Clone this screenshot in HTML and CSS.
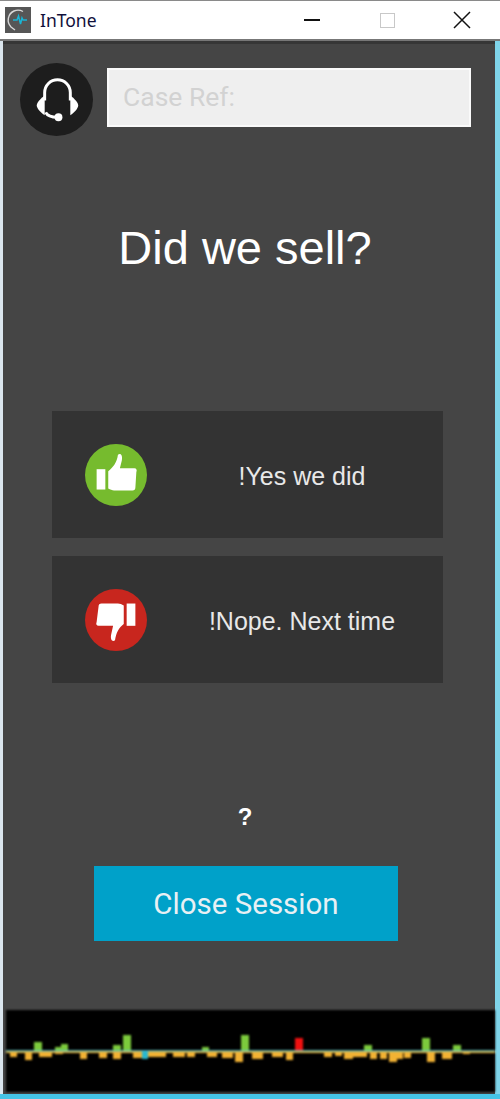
FILE: index.html
```html
<!DOCTYPE html>
<html lang="en">
<head>
    <meta charset="UTF-8">
    <meta name="viewport" content="width=device-width, initial-scale=1.0">
    <title>InTone</title>
    <link rel="stylesheet" href="styles.css">
</head>
<body>
    <div class="window">
        <div class="titlebar">
            <svg class="app-icon" viewBox="0 0 26 26">
                <rect width="26" height="26" fill="#565656"/>
                <path d="M18 4.500a10 10 0 0 0-9-.5 10 10 0 0 0-3 16l4 3" fill="none" stroke="#d8d8d8" stroke-width="1.400"/>
                <path d="M8 13h4l1.500-4 2 8 1.500-6 1 2h4" fill="none" stroke="#19b5d6" stroke-width="1.500"/>
            </svg>
            <span class="app-name">InTone</span>
            <div class="controls">
                <span class="minimize"></span>
                <span class="maximize"></span>
                <svg class="close" viewBox="0 0 18 18">
                    <path d="M1 1l16 16M17 1L1 17" stroke="#111" stroke-width="1.500" fill="none"/>
                </svg>
            </div>
        </div>

        <div class="content">
            <div class="top-row">
                <div class="avatar">
                    <svg viewBox="0 0 74 74" width="73" height="73">
                        <path d="M25 38V30a13 13 0 0 1 26 0v8" fill="none" stroke="#fff" stroke-width="3"/>
                        <path d="M25 33c-4 3-8 7-8 10s4 7 8 10z" fill="#fff"/>
                        <path d="M51 33c4 3 8 7 8 10s-4 7-8 10z" fill="#fff"/>
                        <path d="M26 50c2 4 6 5 12 5" fill="none" stroke="#fff" stroke-width="3"/>
                        <circle cx="39" cy="55" r="4" fill="#fff"/>
                    </svg>
                </div>
                <div class="case-ref">Case Ref:</div>
            </div>

            <h1 class="question">Did we sell?</h1>

            <div class="answers">
                <div class="answer">
                    <span class="badge badge-yes">
                        <svg viewBox="0 0 64 64" width="62" height="62">
                            <rect x="12" y="26" width="9" height="21" fill="#fff"/>
                            <path d="M24 28c5-4 9-9 10-17 3-2 5 1 4 6l-2 8h15c2 0 3 2 2 4l-1 16c0 2-1 3-3 3H30c-2 0-4-1-6-2z" fill="#fff"/>
                        </svg>
                    </span>
                    <span class="answer-text">!Yes we did</span>
                </div>
                <div class="answer">
                    <span class="badge badge-no">
                        <svg viewBox="0 0 64 64" width="62" height="62">
                            <rect x="43" y="15" width="9" height="23" fill="#fff"/>
                            <path d="M40 36c-5 4-8 9-9 17-3 2-5-1-4-6l2-9H14c-2 0-3-2-2-4l2-16c0-2 1-3 3-3h17c2 0 4 1 6 2z" fill="#fff"/>
                        </svg>
                    </span>
                    <span class="answer-text">!Nope. Next time</span>
                </div>
            </div>

            <div class="hint">?</div>
            <button class="close-session">Close Session</button>
        </div>

        <svg class="meter" viewBox="6 1010 489 82" width="489" height="82">
            <g fill="#7ccb3c">
                <rect x="34" y="1042" width="8" height="9"/>
                <rect x="55" y="1047" width="6" height="4"/>
                <rect x="61" y="1044" width="7" height="7"/>
                <rect x="113" y="1045" width="8" height="6"/>
                <rect x="123" y="1035" width="8" height="16"/>
                <rect x="202" y="1047" width="7" height="4"/>
                <rect x="241" y="1035" width="8" height="16"/>
                <rect x="364" y="1045" width="8" height="6"/>
                <rect x="422" y="1038" width="8" height="13"/>
                <rect x="453" y="1045" width="8" height="6"/>
            </g>
            <rect x="295" y="1038" width="8" height="13" fill="#f01010"/>
            <g fill="#f2b233">
                <rect x="6" y="1051" width="489" height="2"/>
                <rect x="10" y="1051" width="7" height="6"/>
                <rect x="25" y="1051" width="7" height="9"/>
                <rect x="39" y="1051" width="13" height="6"/>
                <rect x="55" y="1051" width="8" height="3"/>
                <rect x="70" y="1051" width="7" height="2"/>
                <rect x="80" y="1051" width="7" height="8"/>
                <rect x="92" y="1051" width="5" height="1"/>
                <rect x="99" y="1051" width="8" height="7"/>
                <rect x="113" y="1051" width="8" height="8"/>
                <rect x="133" y="1051" width="9" height="7"/>
                <rect x="148" y="1051" width="18" height="6"/>
                <rect x="173" y="1051" width="12" height="6"/>
                <rect x="187" y="1051" width="8" height="6"/>
                <rect x="207" y="1051" width="10" height="6"/>
                <rect x="222" y="1051" width="11" height="7"/>
                <rect x="235" y="1051" width="8" height="11"/>
                <rect x="252" y="1051" width="11" height="8"/>
                <rect x="272" y="1051" width="11" height="6"/>
                <rect x="286" y="1051" width="7" height="9"/>
                <rect x="305" y="1051" width="12" height="2"/>
                <rect x="324" y="1051" width="8" height="6"/>
                <rect x="335" y="1051" width="7" height="5"/>
                <rect x="344" y="1051" width="9" height="8"/>
                <rect x="353" y="1051" width="14" height="6"/>
                <rect x="370" y="1051" width="7" height="8"/>
                <rect x="380" y="1051" width="7" height="8"/>
                <rect x="389" y="1051" width="8" height="11"/>
                <rect x="397" y="1051" width="6" height="8"/>
                <rect x="404" y="1051" width="7" height="7"/>
                <rect x="427" y="1051" width="8" height="11"/>
                <rect x="442" y="1051" width="10" height="8"/>
                <rect x="463" y="1051" width="7" height="3"/>
                <rect x="483" y="1051" width="9" height="2"/>
            </g>
            <rect x="142" y="1051" width="6" height="8" fill="#29b8cf"/>
            <rect x="6" y="1050" width="489" height="1.500" fill="#4fc4d8" opacity="0.8"/>
        </svg>
    </div>
</body>
</html>
```

FILE: styles.css
```css
html, body {
    margin: 0;
    height: 100%;
}

body {
    background-color: #d9eef5;
    font-family: "Liberation Sans", Arial, sans-serif;
}

.window {
    box-sizing: border-box;
    width: 500px;
    height: 1099px;
    display: flex;
    flex-direction: column;
    border-top: 1px solid #8a8a8a;
    border-bottom: 5px solid #45c4e6;
    background-color: #454545;
    box-shadow: inset 3px 0 0 #dbe6ee, inset -5px 0 0 #7fd4ea;
    overflow: hidden;
}

.titlebar {
    height: 38px;
    display: flex;
    align-items: center;
    padding: 0 29px 0 5px;
    background-color: #fff;
    border-bottom: 2px solid #777;
    box-sizing: content-box;
    flex-shrink: 0;
}

.app-icon {
    width: 26px;
    height: 26px;
    margin-right: 9px;
}

.app-name {
    font-family: "Noto Sans", sans-serif;
    font-size: 17.5px;
    color: #10103a;
}

.controls {
    margin-left: auto;
    display: flex;
    align-items: center;
}

.minimize {
    width: 16px;
    height: 2px;
    background-color: #111;
    margin-right: 60px;
}

.maximize {
    box-sizing: border-box;
    width: 15px;
    height: 15px;
    border: 1px solid #c8c8c8;
    margin-right: 58px;
}

.close {
    width: 18px;
    height: 18px;
}

.content {
    flex: 1;
    display: flex;
    flex-direction: column;
    align-items: center;
    margin: 0 5px 0 3px;
    border-top: 3px solid #363636;
    min-height: 0;
}

.top-row {
    align-self: stretch;
    display: flex;
    align-items: center;
    gap: 14px;
    padding: 19px 24px 0 17px;
}

.avatar {
    width: 73px;
    height: 73px;
    border-radius: 50%;
    background-color: #1d1d1d;
    flex-shrink: 0;
}

.case-ref {
    flex: 1;
    box-sizing: border-box;
    height: 59px;
    margin-top: -5px;
    padding-left: 14px;
    line-height: 53px;
    font-family: Roboto, sans-serif;
    font-size: 26.5px;
    color: #d2d2d2;
    background-color: #efefef;
    border: 2px solid #fafafa;
}

.question {
    margin: 85px 8px 0 0;
    font-size: 47px;
    line-height: 54px;
    font-weight: 400;
    color: #fff;
}

.answers {
    display: flex;
    flex-direction: column;
    gap: 18px;
    margin: 136px 4px 0 0;
}

.answer {
    width: 391px;
    height: 127px;
    display: flex;
    align-items: center;
    background-color: #333;
}

.badge {
    width: 62px;
    height: 62px;
    margin-left: 33px;
    border-radius: 50%;
    flex-shrink: 0;
}

.badge-yes {
    background-color: #76bb2e;
}

.badge-no {
    background-color: #c8261e;
}

.answer-text {
    flex: 1;
    padding: 4px 0 0 15px;
    text-align: center;
    font-family: "Liberation Sans", sans-serif;
    font-size: 25px;
    color: #e8e8e8;
}

.hint {
    margin: 119px 8px 0 0;
    font-size: 24px;
    line-height: 30px;
    font-weight: 700;
    color: #fff;
}

.close-session {
    width: 304px;
    height: 75px;
    margin: 34px 6px 0 0;
    border: none;
    background-color: #00a1c9;
    color: #e8f0f4;
    font-family: Roboto, sans-serif;
    font-size: 29.5px;
}

.meter {
    display: block;
    flex-shrink: 0;
    margin: 0 0 2px 6px;
    background-color: #000;
    filter: blur(0.8px);
}
```
